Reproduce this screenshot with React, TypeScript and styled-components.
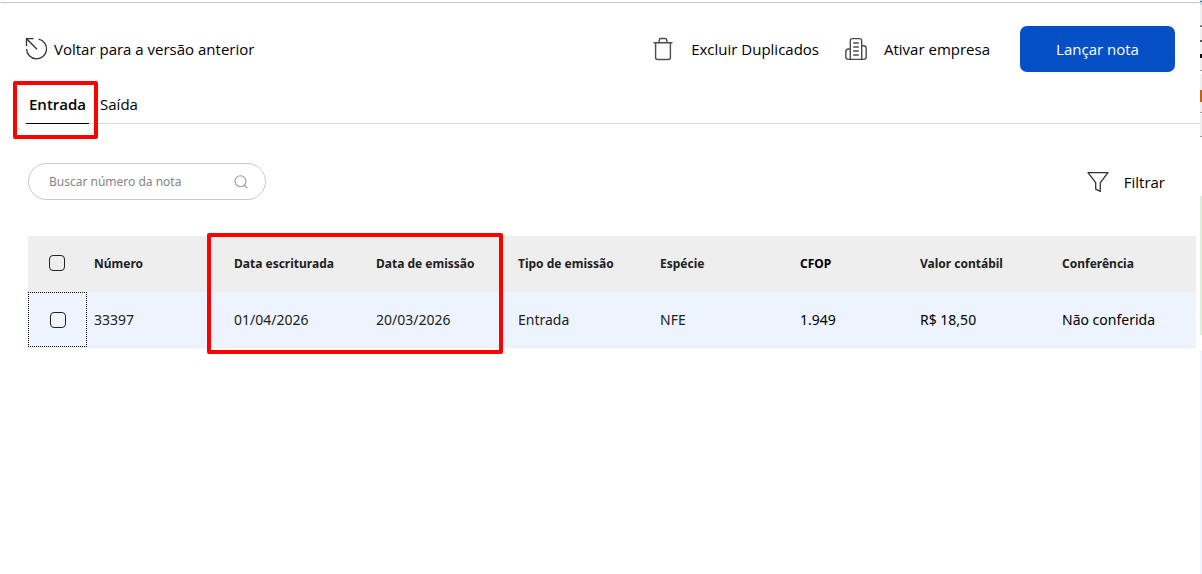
import React from "react";
import styled, { createGlobalStyle, css } from "styled-components";

const GlobalStyle = createGlobalStyle`
  *, *::before, *::after { box-sizing: border-box; }
  body {
    margin: 0;
    background: #fff;
    color: #000;
    font-family: "Open Sans", "Noto Sans", sans-serif;
    font-size: 15px;
    line-height: 20px;
  }
  button, input { font: inherit; color: inherit; }
`;

const Page = styled.div`
  display: flex;
  min-height: 100vh;
`;

const Main = styled.main`
  flex: 1;
  min-width: 0;
  padding-top: 2px;
`;

const TopRule = styled.div`
  height: 1px;
  margin: 0 1px;
  background: #c8c8c8;
`;

const Toolbar = styled.header`
  display: flex;
  align-items: center;
  justify-content: space-between;
  padding: 23px 25px 0 25px;
`;

const Actions = styled.div`
  display: flex;
  align-items: center;
`;

const TextButton = styled.button<{ $gap: number }>`
  display: flex;
  align-items: center;
  gap: ${({ $gap }) => $gap}px;
  padding: 0;
  border: 0;
  background: none;
  white-space: nowrap;
  cursor: pointer;

  & + & { margin-left: 26px; }
`;

const PrimaryButton = styled.button`
  width: 155px;
  height: 46px;
  margin-left: 30px;
  border: 0;
  border-radius: 7px;
  background: #0550c5;
  color: #fff;
  cursor: pointer;
`;

const Tabs = styled.nav`
  display: flex;
  margin: 16px 0 0 24px;
  padding-left: 2px;
  border-bottom: 1px solid #d9d9d9;
`;

const Tab = styled.button<{ $active?: boolean }>`
  position: relative;
  height: 36px;
  margin-bottom: -1px;
  padding: 0 3px 4px;
  border: 0;
  border-bottom: 1px solid transparent;
  background: none;
  cursor: pointer;

  & + & { padding-left: 11px; }

  ${({ $active }) =>
    $active &&
    css`
      border-bottom-color: #000;
      font-weight: 600;
    `}
`;

const Highlight = styled.span`
  position: absolute;
  z-index: 2;
  border: 4px solid #ff0000;
  border-radius: 2px;
  pointer-events: none;
`;

const TabHighlight = styled(Highlight)`
  inset: -7px -9px -16px -13px;
`;

const DatesHighlight = styled(Highlight)`
  top: -3px;
  left: -19px;
  width: calc(200% + 12px);
  height: 121px;
`;

const Filters = styled.div`
  display: flex;
  align-items: center;
  justify-content: space-between;
  padding: 39px 35px 0 28px;
`;

const SearchBox = styled.label`
  display: flex;
  align-items: center;
  width: 238px;
  height: 37px;
  padding: 0 17px 0 20px;
  border: 1px solid #c8c8c8;
  border-radius: 19px;
`;

const SearchInput = styled.input`
  flex: 1;
  min-width: 0;
  padding: 0;
  border: 0;
  outline: 0;
  background: none;
  font-family: "Noto Sans", sans-serif;
  font-size: 12px;

  &::placeholder { color: #858585; opacity: 1; }
`;

const TableArea = styled.section`
  padding: 36px 4px 0 28px;
`;

const Table = styled.table`
  width: 100%;
  table-layout: fixed;
  border-collapse: separate;
  border-spacing: 0;
  font-family: "Noto Sans", sans-serif;
`;

const Th = styled.th<{ $dark?: boolean }>`
  position: relative;
  height: 56px;
  padding: 0 8px;
  background: #eeeeee;
  color: ${({ $dark }) => ($dark ? "#000" : "#212121")};
  font-size: 12px;
  font-weight: 700;
  text-align: left;
  white-space: nowrap;
`;

const Td = styled.td<{ $dark?: boolean }>`
  height: 56px;
  padding: 0 8px;
  border-bottom: 1px solid #eaedf1;
  background: #edf4ff;
  color: ${({ $dark }) => ($dark ? "#000" : "#212121")};
  font-size: 14px;
  white-space: nowrap;
`;

const FocusedTd = styled(Td)`
  padding: 0;
`;

const FocusRing = styled.div`
  position: relative;
  z-index: 1;
  display: flex;
  align-items: center;
  justify-content: center;
  height: 55px;
  margin-right: -1px;
  border: 1px dotted #000;
`;

const CheckTh = styled(Th)`
  padding: 0 0 2px;
`;

const Checkbox = styled.input.attrs({ type: "checkbox" })`
  display: block;
  appearance: none;
  width: 16px;
  height: 16px;
  margin: 0 auto;
  border: 1px solid #212121;
  border-radius: 4px;
  background: transparent;

  &:checked { background: #0550c5; }
  ${FocusRing} & { margin: 0; }
`;

const Edge = styled.aside`
  display: flex;
  flex-direction: column;
  width: 2px;
`;

const EdgeBand = styled.div<{ $height?: number; $color?: string }>`
  flex: ${({ $height }) => ($height ? `0 0 ${$height}px` : "1")};
  background: ${({ $color }) => $color ?? "transparent"};
`;

const edgeBands: [number, string?][] = [
  [1, "#bfdbe8"], [1, "#5c6b78"], [3, "#bfdbe8"], [20, "#efefef"], [1, "#999999"],
  [1, "#666666"], [1], [12, "#efefef"], [2, "#555555"], [12, "#efefef"],
  [4, "#111111"], [12, "#efefef"], [1, "#999999"], [3], [16, "#efefef"],
  [12, "#b5651d"], [10, "#efefef"], [1, "#999999"], [1], [22, "#efefef"],
  [1, "#999999"], [59], [139, "#dcf0dc"], [16],
];

const ReturnIcon = () => (
  <svg width="23" height="24" viewBox="0 0 23 24" fill="none" stroke="#333" strokeWidth="1.3" aria-hidden="true">
    <path d="M8.5 1.7H1.5V9M1.6 1.8L12 12.2M13.6 2.1A10 10 0 1 1 1.6 12" />
  </svg>
);

const TrashIcon = () => (
  <svg width="20" height="24" viewBox="0 0 20 24" fill="none" stroke="#4c4c4c" strokeWidth="1.4" strokeLinecap="round" strokeLinejoin="round" aria-hidden="true">
    <path d="M1 5.7H19M5.8 5.5L6.5 2.4Q6.8 1.5 7.8 1.5H12.2Q13.2 1.5 13.5 2.4L14.2 5.5M2.6 5.8V20.5Q2.6 22.5 4.6 22.5H15.4Q17.4 22.5 17.4 20.5V5.8" />
  </svg>
);

const CompanyIcon = () => (
  <svg width="22" height="24" viewBox="0 0 22 24" fill="none" stroke="#4c4c4c" strokeWidth="1.4" strokeLinejoin="round" aria-hidden="true">
    <path d="M5.3 22.4V3.6Q5.3 1.6 7.3 1.6H14.7Q16.7 1.6 16.7 3.6V22.4M5.3 12H3.4Q.8 12 .8 14.8V19.8Q.8 22.4 3.4 22.4H18.6Q21.2 22.4 21.2 19.8V11.6Q21.2 8.8 18.6 8.8H16.7" />
    <path d="M8.2 6H13.8M8.2 10H13.8M8.2 14H13.8M8.2 18H13.8" />
  </svg>
);

const SearchIcon = () => (
  <svg width="14" height="14" viewBox="0 0 14 14" fill="none" stroke="#999" strokeWidth="1.1" strokeLinecap="round" aria-hidden="true">
    <circle cx="6.5" cy="6.3" r="5.5" />
    <path d="M10.5 10.5L13 13" />
  </svg>
);

const FilterIcon = () => (
  <svg width="22" height="22" viewBox="0 0 22 22" fill="none" stroke="#333" strokeWidth="1.3" strokeLinejoin="round" aria-hidden="true">
    <path d="M1 1.6H21L13.3 11.7V20.4L8.7 18.2V11.7Z" />
  </svg>
);

const columns = [
  { title: "Número", value: "33397", width: 140 },
  { title: "Data escriturada", value: "01/04/2026", width: 142 },
  { title: "Data de emissão", value: "20/03/2026", width: 142 },
  { title: "Tipo de emissão", value: "Entrada", width: 142 },
  { title: "Espécie", value: "NFE", width: 140 },
  { title: "CFOP", value: "1.949", width: 120, darkTitle: true, darkValue: true },
  { title: "Valor contábil", value: "R$ 18,50", width: 142, darkValue: true },
  { title: "Conferência", value: "Não conferida", width: 142, darkValue: true },
];

export default function App() {
  return (
    <>
      <GlobalStyle />
      <Page>
        <Main>
          <TopRule />
          <Toolbar>
            <TextButton $gap={6}>
              <ReturnIcon />
              Voltar para a versão anterior
            </TextButton>
            <Actions>
              <TextButton $gap={18}>
                <TrashIcon />
                Excluir Duplicados
              </TextButton>
              <TextButton $gap={17}>
                <CompanyIcon />
                Ativar empresa
              </TextButton>
              <PrimaryButton>Lançar nota</PrimaryButton>
            </Actions>
          </Toolbar>
          <Tabs>
            <Tab $active>
              Entrada
              <TabHighlight />
            </Tab>
            <Tab>Saída</Tab>
          </Tabs>
          <Filters>
            <SearchBox>
              <SearchInput type="text" placeholder="Buscar número da nota" aria-label="Buscar número da nota" />
              <SearchIcon />
            </SearchBox>
            <TextButton $gap={15}>
              <FilterIcon />
              Filtrar
            </TextButton>
          </Filters>
          <TableArea>
            <Table>
              <colgroup>
                <col width={58} />
                {columns.map((c) => (
                  <col key={c.title} width={c.width} />
                ))}
              </colgroup>
              <thead>
                <tr>
                  <CheckTh>
                    <Checkbox aria-label="Selecionar todas as notas" />
                  </CheckTh>
                  {columns.map((c) => (
                    <Th key={c.title} scope="col" $dark={c.darkTitle}>
                      {c.title}
                      {c.title === "Data escriturada" && <DatesHighlight />}
                    </Th>
                  ))}
                </tr>
              </thead>
              <tbody>
                <tr>
                  <FocusedTd>
                    <FocusRing>
                      <Checkbox aria-label="Selecionar nota 33397" />
                    </FocusRing>
                  </FocusedTd>
                  {columns.map((c) => (
                    <Td key={c.title} $dark={c.darkValue}>{c.value}</Td>
                  ))}
                </tr>
              </tbody>
            </Table>
          </TableArea>
        </Main>
        <Edge aria-hidden="true">
          {edgeBands.map(([height, color], i) => (
            <EdgeBand key={i} $height={height} $color={color} />
          ))}
          <EdgeBand $color="#f0f5ff" />
        </Edge>
      </Page>
    </>
  );
}
